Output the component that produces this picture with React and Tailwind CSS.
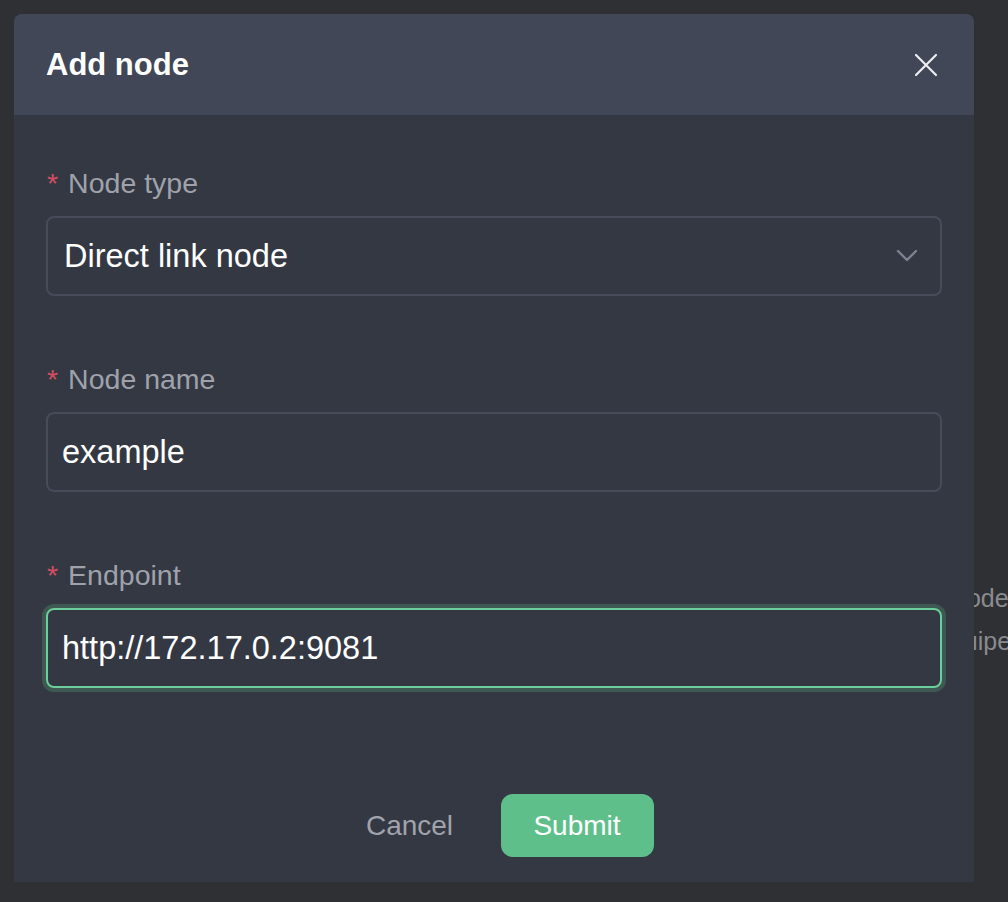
import React from "react";

function Field({ label, children, last }) {
  return (
    <div className={last ? "" : "mb-[63px]"}>
      <div className="flex items-center h-[40px] mb-[13px] text-[28.5px] text-[#9fa2ab] leading-none">
        <span className="text-[#d24d62] mr-[10px] ml-[1px]">*</span>
        <span>{label}</span>
      </div>
      {children}
    </div>
  );
}

export default function App() {
  return (
    <div
      className="relative w-[1008px] h-[902px] overflow-hidden bg-[#2f3033]"
      style={{ fontFamily: '"Liberation Sans", Arial, sans-serif' }}
    >
      <div className="absolute left-[953px] top-[577px] text-[25px] leading-[43px] text-[#8a8b8e] whitespace-nowrap">
        node list
      </div>
      <div className="absolute left-[936px] top-[620px] text-[25px] leading-[43px] text-[#8a8b8e] whitespace-nowrap">
        equipe
      </div>

      <div className="absolute left-[14px] top-[14px] w-[960px] h-[868px] flex flex-col bg-[#343843] rounded-t-[8px] overflow-hidden">
        <div className="h-[101px] shrink-0 bg-[#414756] flex items-center justify-between pl-[32px] pr-[36px]">
          <div className="text-[31px] font-bold text-white leading-none">Add node</div>
          <svg width="24" height="24" viewBox="0 0 24 24" className="text-[#eceef2]">
            <path d="M2 2 L22 22 M22 2 L2 22" stroke="currentColor" strokeWidth="2.2" strokeLinecap="round" />
          </svg>
        </div>

        <div className="flex-1 flex flex-col px-[32px] pt-[48px] pb-[25px]">
          <Field label="Node type">
            <div className="h-[80px] rounded-[8px] border-2 border-[#474c5a] flex items-center justify-between pl-[16px] pr-[22px]">
              <span className="text-[32.5px] text-white leading-none">Direct link node</span>
              <svg width="22" height="14" viewBox="0 0 22 14">
                <path d="M2 2 L11 11 L20 2" fill="none" stroke="#7d8190" strokeWidth="2.4" strokeLinecap="round" strokeLinejoin="round" />
              </svg>
            </div>
          </Field>
          <Field label="Node name">
            <div className="h-[80px] rounded-[8px] border-2 border-[#474c5a] flex items-center pl-[14px]">
              <span className="text-[32.5px] text-white leading-none">example</span>
            </div>
          </Field>
          <Field label="Endpoint" last>
            <div className="h-[80px] rounded-[8px] border-2 border-[#6ccf9b] shadow-[0_0_0_4px_#3e5952] flex items-center pl-[14px]">
              <span className="text-[32.5px] text-white leading-none">http://172.17.0.2:9081</span>
            </div>
          </Field>

          <div className="mt-auto flex justify-center gap-[16px]">
            <button className="h-[63px] w-[150px] text-[28px] text-[#a0a3ab] leading-none rounded-[12px]">
              Cancel
            </button>
            <button className="h-[63px] w-[153px] text-[28px] text-white leading-none rounded-[12px] bg-[#5fbf8b]">
              Submit
            </button>
          </div>
        </div>
      </div>
    </div>
  );
}
